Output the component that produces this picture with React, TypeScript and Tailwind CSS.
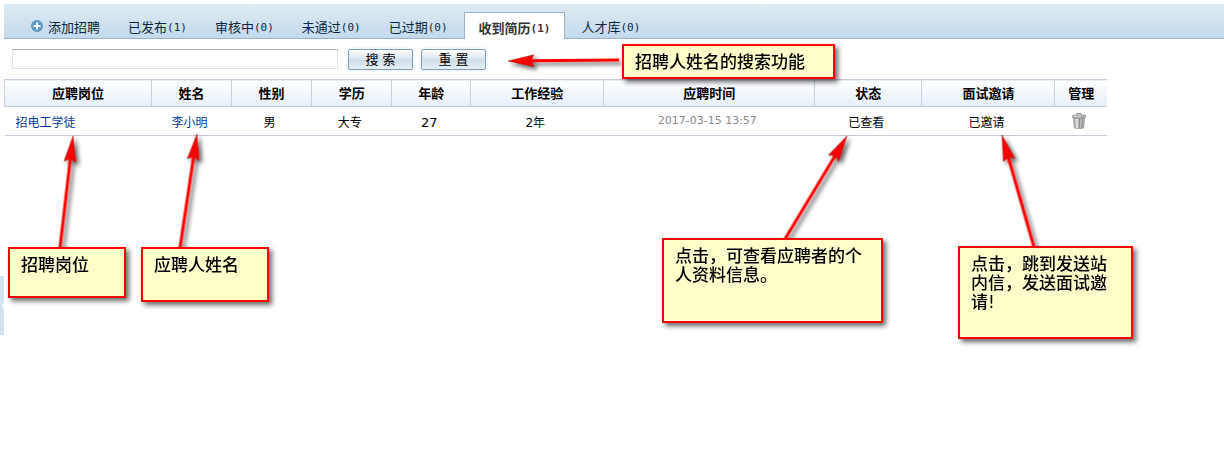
interface Tab {
  label: string;
  count?: number;
  active?: boolean;
}

interface Note {
  text: string;
  box: string;
  tip: [number, number];
  tail: [number, number];
}

const tabs: Tab[] = [
  { label: '添加招聘' },
  { label: '已发布', count: 1 },
  { label: '审核中', count: 0 },
  { label: '未通过', count: 0 },
  { label: '已过期', count: 0 },
  { label: '收到简历', count: 1, active: true },
  { label: '人才库', count: 0 },
];

const columns = [
  { title: '应聘岗位', width: 'w-[147px]' },
  { title: '姓名', width: 'w-[80px]' },
  { title: '性别', width: 'w-[80px]' },
  { title: '学历', width: 'w-[80px]' },
  { title: '年龄', width: 'w-[79px]' },
  { title: '工作经验', width: 'w-[133px]' },
  { title: '应聘时间', width: 'w-[211px]' },
  { title: '状态', width: 'w-[107px]' },
  { title: '面试邀请', width: 'w-[133px]' },
  { title: '管理', width: 'w-[52px]' },
];

const resumes = [
  {
    id: 1,
    job: '招电工学徒',
    name: '李小明',
    gender: '男',
    education: '大专',
    age: 27,
    experience: '2年',
    appliedAt: '2017-03-15 13:57',
    status: '已查看',
    invite: '已邀请',
  },
];

// Callouts are pinned on top of the page, coordinates are canvas pixels
const notes: Note[] = [
  { text: '招聘人姓名的搜索功能', box: 'left-[622px] top-[44px] w-[213px] h-[35px]', tip: [508, 61], tail: [619, 60] },
  { text: '招聘岗位', box: 'left-[8px] top-[247px] w-[118px] h-[51px]', tip: [73, 136], tail: [60, 248] },
  { text: '应聘人姓名', box: 'left-[141px] top-[247px] w-[128px] h-[55px]', tip: [197, 134], tail: [180, 248] },
  { text: '点击，可查看应聘者的个人资料信息。', box: 'left-[662px] top-[238px] w-[221px] h-[85px]', tip: [847, 136], tail: [785, 239] },
  { text: '点击，跳到发送站内信，发送面试邀请!', box: 'left-[958px] top-[246px] w-[175px] h-[93px]', tip: [1002, 135], tail: [1034, 247] },
];

function AddIcon() {
  return (
    <svg className="w-3 h-3 mr-[5px] -mt-1" viewBox="0 0 12 12" aria-hidden="true">
      <circle cx="6" cy="6" r="6" fill="#5f97c6" />
      <path d="M5 2.5h2V5h2.5v2H7v2.5H5V7H2.5V5H5z" fill="#fff" />
    </svg>
  );
}

function TrashIcon() {
  return (
    <svg className="w-4 h-4" viewBox="0 0 16 16" aria-hidden="true">
      <path d="M6 2V.5h4V2" fill="none" stroke="#8a8a8a" />
      <path d="M2.5 5h11l-.8 10q-4.7 1.2-9.4 0z" fill="#b8b8b8" stroke="#929292" strokeWidth=".8" />
      <path d="M4.5 5.5H7l.2 9.700H5z" fill="#dcdcdc" />
      <path d="M8.500 5.500v9.500M11.500 5.500l-.4 9.300" stroke="#8e8e8e" />
      <rect x="1.300" y="2" width="13.400" height="3.200" rx="1.400" fill="#ababab" stroke="#8a8a8a" strokeWidth=".6" />
      <path d="M2.500 3.300H10" stroke="#dedede" />
    </svg>
  );
}

function Arrow({ tip, tail }: { tip: [number, number]; tail: [number, number] }) {
  const dx = tail[0] - tip[0];
  const dy = tail[1] - tip[1];
  const length = Math.hypot(dx, dy);
  const angle = (Math.atan2(dy, dx) * 180) / Math.PI;

  return (
    <g transform={`translate(${tip[0]} ${tip[1]}) rotate(${angle})`}>
      <path d={`M22 0H${length}`} stroke="#f00" strokeWidth="3" />
      <path d="M0 0L26-6L23 0L26 6Z" fill="#f00" stroke="#8a2020" strokeWidth=".5" />
    </g>
  );
}

function Annotations() {
  return (
    <>
      <svg className="absolute left-0 top-0 w-[1224px] h-[471px] pointer-events-none" viewBox="0 0 1224 471" aria-hidden="true">
        <defs>
          <filter id="arrow-shadow" filterUnits="userSpaceOnUse" x="0" y="0" width="1224" height="471">
            <feDropShadow dx="3" dy="3" stdDeviation="2" floodColor="#000" floodOpacity="0.6" />
          </filter>
        </defs>
        <g filter="url(#arrow-shadow)">
          {notes.map((note) => (
            <Arrow key={note.text} tip={note.tip} tail={note.tail} />
          ))}
        </g>
      </svg>
      {notes.map((note) => (
        <div
          key={note.text}
          className={`absolute ${note.box} border-2 border-[#f00] bg-[#ffffcc] pt-[7px] pl-[11px] pr-3 text-[17px] leading-[19px] font-medium text-black shadow-[3px_3px_5px_rgba(0,0,0,0.6)]`}
        >
          {note.text}
        </div>
      ))}
    </>
  );
}

export default function App() {
  const button =
    'w-[65px] h-[21px] border border-[#7f9db9] rounded-[2px] bg-linear-to-b from-white from-0% via-[#cfdfea] via-55% to-[#e6f0f6] ring-2 ring-[#f5f9fd] text-[13px] leading-[19px] text-black';
  const cell = 'p-0 pt-[3px] pr-1';

  return (
    <div className="relative flex min-h-screen overflow-hidden bg-white font-['DejaVu_Sans','Noto_Sans_CJK_SC',sans-serif] text-xs text-black">
      <aside className="w-1 shrink-0 pt-[276px]">
        <div className="h-[59px] bg-[#d0e4ef] flex items-center">
          <div className="w-full h-2 border-y-4 border-r-2 border-transparent border-r-white" />
        </div>
      </aside>

      <main className="flex-1 min-w-0 pt-1">
        {/* Tabs */}
        <nav className="h-[35px] flex items-end pl-[13px] border-b border-[#9ab4cd] bg-linear-to-b from-[#dfebf3] to-[#c3d9eb]">
          {tabs.map((tab) => (
            <a
              key={tab.label}
              href="#"
              className={
                tab.active
                  ? 'h-[27px] -mb-px mx-[2px] px-[14px] flex items-center pt-[6px] border border-b-0 border-[#9ab4cd] bg-white text-[13px] font-bold text-[#333] whitespace-nowrap'
                  : 'h-[26px] px-[14px] flex items-center pt-[6px] text-[13px] text-[#0b2740] whitespace-nowrap'
              }
            >
              {tab.count === undefined && <AddIcon />}
              {tab.label}
              {tab.count !== undefined && (
                <span className="font-['DejaVu_Sans_Mono',monospace] text-[11px]">({tab.count})</span>
              )}
            </a>
          ))}
        </nav>

        {/* Search */}
        <form className="h-10 flex items-center pl-2" onSubmit={(e) => e.preventDefault()}>
          <input
            type="text"
            aria-label="姓名"
            className="w-[326px] h-5 px-1 border border-[#e2e3ea] border-t-[#abadb3] bg-white rounded-[1px] outline-none"
          />
          <button type="submit" className={`${button} ml-[10px]`}>搜 索</button>
          <button type="reset" className={`${button} ml-2`}>重 置</button>
        </form>

        {/* Resumes */}
        <table className="w-full max-w-[1103px] table-fixed border-collapse text-center">
          <thead>
            <tr className="h-[27px] bg-linear-to-b from-white to-[#e6effa] border-y border-[#c8ccd9]">
              {columns.map((col) => (
                <th
                  key={col.title}
                  scope="col"
                  className={`${col.width} p-0 pt-[2px] border-r border-[#c8d0dd] first:border-l last:border-r-0 text-[13px] font-bold`}
                >
                  {col.title}
                </th>
              ))}
            </tr>
          </thead>
          <tbody>
            {resumes.map((r) => (
              <tr key={r.id} className="h-[29px] border-b border-[#c8ccd9]">
                <td className="p-0 pt-[3px] pl-[11px] text-left">
                  <a href="#" className="text-[#003d9e]">{r.job}</a>
                </td>
                <td className={cell}>
                  <a href="#" className="text-[#003d9e]">{r.name}</a>
                </td>
                <td className={cell}>{r.gender}</td>
                <td className={cell}>{r.education}</td>
                <td className={`${cell} text-[13px]`}>{r.age}</td>
                <td className={cell}>{r.experience}</td>
                <td className="p-0 pr-1 text-[11px] text-[#8c8c8c]">{r.appliedAt}</td>
                <td className={cell}>{r.status}</td>
                <td className={cell}>{r.invite}</td>
                <td className="p-0 pr-1">
                  <button type="button" aria-label="删除" className="block mx-auto">
                    <TrashIcon />
                  </button>
                </td>
              </tr>
            ))}
          </tbody>
        </table>
      </main>

      <Annotations />
    </div>
  );
}
